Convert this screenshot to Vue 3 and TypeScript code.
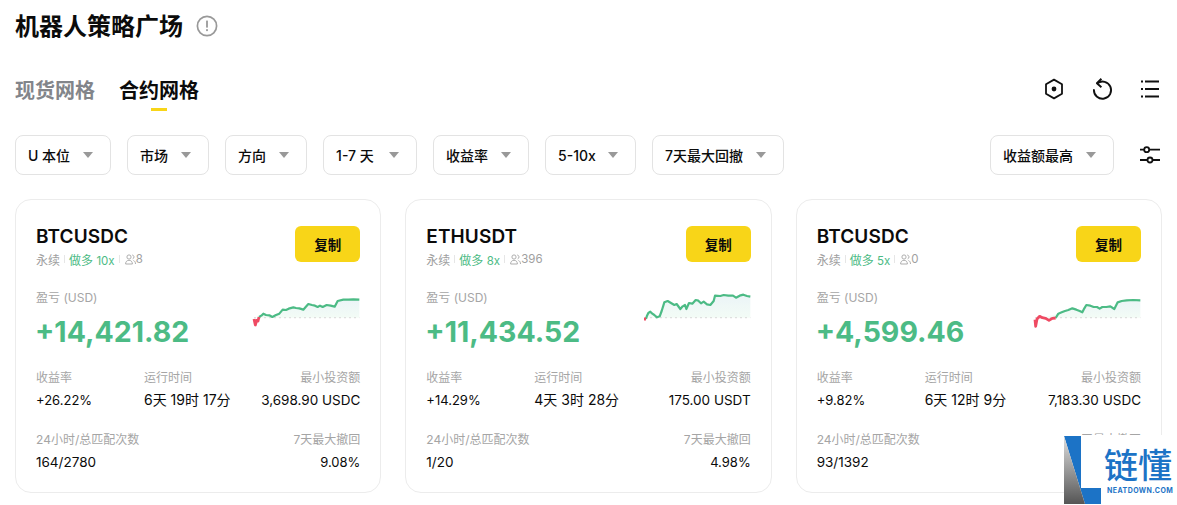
<script setup lang="ts">
type Pt = [number, number]
interface Bot {
  symbol: string; side: string; lev: string; users: string; pnl: string
  rate: string; runtime: string; minInvest: string; matches: string; drawdown: string
  offset: number; split: number; pts: Pt[]
}

const filters = ['U 本位', '市场', '方向', '1-7 天', '收益率', '5-10x', '7天最大回撤']

const bots: Bot[] = [
  {
    symbol: 'BTCUSDC', side: '做多', lev: '10x', users: '8', pnl: '+14,421.82', rate: '+26.22%',
    runtime: '6天 19时 17分', minInvest: '3,698.90 USDC', matches: '164/2780', drawdown: '9.08%',
    offset: 30, split: 4,
    pts: [[42, 102], [46, 120], [50, 106], [54, 108], [57, 96], [64, 92], [70, 86], [78, 90], [88, 91], [97, 96], [108, 90], [118, 86], [128, 74], [138, 75], [146, 71], [160, 67], [168, 69], [178, 70], [190, 74], [197, 66], [205, 57], [216, 60], [225, 62], [233, 66], [240, 62], [248, 66], [260, 60], [272, 62], [284, 65], [293, 48], [310, 44], [325, 44], [340, 43], [358, 44]],
  },
  {
    symbol: 'ETHUSDT', side: '做多', lev: '8x', users: '396', pnl: '+11,434.52', rate: '+14.29%',
    runtime: '4天 3时 28分', minInvest: '175.00 USDT', matches: '1/20', drawdown: '4.98%',
    offset: 18, split: 1,
    pts: [[27, 102], [33, 102], [36, 92], [40, 84], [46, 80], [52, 86], [58, 90], [66, 97], [74, 94], [80, 78], [88, 52], [98, 48], [108, 54], [118, 60], [125, 57], [136, 72], [143, 64], [150, 60], [154, 72], [162, 54], [172, 56], [182, 45], [190, 47], [198, 55], [206, 50], [216, 58], [226, 60], [236, 48], [240, 32], [256, 33], [266, 30], [280, 32], [294, 32], [303, 38], [314, 32], [325, 29], [336, 33], [346, 35]],
  },
  {
    // drawdown value sits under the watermark in the reference, so it stays empty
    symbol: 'BTCUSDC', side: '做多', lev: '5x', users: '0', pnl: '+4,599.46', rate: '+9.82%',
    runtime: '6天 12时 9分', minInvest: '7,183.30 USDC', matches: '93/1392', drawdown: '',
    offset: 18, split: 8,
    pts: [[30, 104], [32, 124], [36, 102], [44, 94], [52, 98], [62, 100], [72, 106], [82, 100], [92, 99], [100, 86], [110, 82], [120, 78], [130, 75], [142, 70], [154, 74], [164, 78], [172, 82], [178, 70], [184, 60], [196, 62], [206, 66], [216, 66], [224, 71], [232, 66], [244, 66], [256, 64], [268, 72], [278, 52], [290, 48], [305, 46], [325, 45], [346, 46]],
  },
]

const line = (pts: Pt[], off: number) => pts.map(([x, y]) => `${(x - off) / 3},${y / 3}`).join(' ')

const redLine = (b: Bot) => line(b.pts.slice(0, b.split + 1), b.offset)
const greenLine = (b: Bot) => line(b.pts.slice(b.split), b.offset)

// area between the curve and the dotted base line
const area = (b: Bot) => {
  const first = b.pts[0]
  const last = b.pts[b.pts.length - 1]
  const base = 98 / 3
  return `${(first[0] - b.offset) / 3},${base} ${line(b.pts.filter(p => p[1] <= 98), b.offset)} ${(last[0] - b.offset) / 3},${base}`
}
const baseEnd = (b: Bot) => (b.pts[b.pts.length - 1][0] - b.offset) / 3
</script>

<template>
  <div class="page">
    <div class="title-row">
      <h1>机器人策略广场</h1>
      <svg class="info" width="22" height="22" viewBox="0 0 22 22" aria-hidden="true">
        <circle cx="11" cy="11" r="9.6" fill="none" stroke="#999" stroke-width="1.7" />
        <rect x="10.1" y="5.6" width="1.8" height="7" fill="#999" />
        <rect x="10.1" y="14.2" width="1.8" height="1.9" fill="#999" />
      </svg>
    </div>

    <div class="tab-row">
      <div class="tabs">
        <span class="tab">现货网格</span>
        <span class="tab active">合约网格</span>
      </div>
      <div class="tools">
        <svg width="24" height="24" viewBox="0 0 24 24" fill="none" stroke="#111" stroke-width="1.8" aria-hidden="true">
          <path d="M12 2.6 20 7.2v9.6l-8 4.6-8-4.600V7.200z" stroke-linejoin="round" />
          <circle cx="12" cy="12" r="2.4" fill="#111" stroke="none" />
        </svg>
        <svg width="24" height="24" viewBox="0 0 24 24" fill="none" stroke="#111" stroke-width="1.9" aria-hidden="true">
          <path d="M7.4 6.2A8.6 8.6 0 1 1 3.900 13" stroke-linecap="round" />
          <path d="M11.4 1.800 6.900 6.200l4.500 4" stroke-linejoin="round" />
        </svg>
        <svg width="24" height="24" viewBox="0 0 24 24" fill="none" stroke="#111" stroke-width="2" aria-hidden="true">
          <path d="M7 4.500h14M7 12h14M7 19.500h14M3 4.500h2M3 12h2M3 19.500h2" />
        </svg>
      </div>
    </div>

    <div class="filter-row">
      <div v-for="f in filters" :key="f" class="select">
        <span>{{ f }}</span><i class="caret"></i>
      </div>
      <div class="select sort"><span>收益额最高</span><i class="caret"></i></div>
      <svg class="sliders" width="24" height="24" viewBox="0 0 24 24" fill="none" stroke="#111" stroke-width="1.8" aria-hidden="true">
        <path d="M2 6.700h4.400M11 6.700h11M2 17h7.400M14 17h8" />
        <circle cx="8.700" cy="6.700" r="2.500" />
        <circle cx="12" cy="17" r="2.500" />
      </svg>
    </div>

    <div class="cards">
      <div v-for="(b, i) in bots" :key="i" class="card">
        <div class="card-head">
          <div>
            <div class="symbol">{{ b.symbol }}</div>
            <div class="meta">
              <span>永续</span><i class="sep"></i>
              <span class="green">{{ b.side }} <span class="lev">{{ b.lev }}</span></span><i class="sep"></i>
              <svg class="people" width="11" height="11" viewBox="0 0 11 11" fill="none" stroke="#a5a5a5" stroke-width="0.9" aria-hidden="true">
                <circle cx="4" cy="3" r="2.100" />
                <path d="M.6 10c0-2.400 1.400-3.700 3.400-3.700S7.400 7.600 7.400 10zM7.200 1c1.200.2 1.800 1 1.800 2S8.400 4.600 7.600 4.900M8.400 6.500c1.300.4 2.100 1.600 2.100 3.500" />
              </svg>
              <span class="users">{{ b.users }}</span>
            </div>
          </div>
          <button class="copy">复制</button>
        </div>

        <div class="pnl-row">
          <div>
            <div class="label">盈亏 (USD)</div>
            <div class="pnl">{{ b.pnl }}</div>
          </div>
          <svg class="spark" width="110" height="50" viewBox="0 0 110 50" aria-hidden="true">
            <defs>
              <linearGradient :id="`fill${i}`" x1="0" y1="0" x2="0" y2="1">
                <stop offset="0" stop-color="#ebf4f7" />
                <stop offset="1" stop-color="#f3fcf6" />
              </linearGradient>
            </defs>
            <polygon :points="area(b)" :fill="`url(#fill${i})`" />
            <line x1="4" :x2="baseEnd(b)" y1="32.700" y2="32.700" stroke="#dfdfdf" stroke-width="1.200" stroke-dasharray="2 3" />
            <polyline :points="greenLine(b)" fill="none" stroke="#4cbb85" stroke-width="2.200" stroke-linejoin="round" />
            <polyline :points="redLine(b)" fill="none" stroke="#ef4a63" stroke-width="2.800" stroke-linejoin="round" />
          </svg>
        </div>

        <div class="stats">
          <div><div class="label">收益率</div><div class="val small">{{ b.rate }}</div></div>
          <div><div class="label">运行时间</div><div class="val runtime">{{ b.runtime }}</div></div>
          <div class="right"><div class="label">最小投资额</div><div class="val">{{ b.minInvest }}</div></div>
          <div class="wide"><div class="label">24小时/总匹配次数</div><div class="val">{{ b.matches }}</div></div>
          <div class="right"><div class="label">7天最大撤回</div><div class="val small">{{ b.drawdown }}</div></div>
        </div>
      </div>
    </div>

    <div class="watermark">
      <svg width="37" height="68" viewBox="0 0 37 68" aria-hidden="true">
        <defs>
          <linearGradient id="wmGray" x1="0" y1="0" x2="0" y2="1">
            <stop offset="0" stop-color="#dedede" />
            <stop offset="1" stop-color="#555" />
          </linearGradient>
        </defs>
        <polygon points="0,0 17,0 17,52 37,52 37,68 21,68" fill="#1c73c6" />
        <polygon points="0,0 21,68 0,68" fill="url(#wmGray)" />
      </svg>
      <div class="wm-text">
        <div class="wm-cn">链懂</div>
        <div class="wm-en">NEATDOWN.COM</div>
      </div>
    </div>
  </div>
</template>

<style>
html, body { margin: 0; background: #fff; overflow: hidden; }
</style>

<style scoped>
.page { position: relative; width: 1177px; height: 505px; overflow: hidden; box-sizing: border-box; padding: 0 15px; color: #0b0b0b; font-family: Inter, "Noto Sans CJK SC", sans-serif; }
.title-row { display: flex; align-items: center; gap: 13px; height: 53px; }
h1 { margin: 0; font-size: 24px; font-weight: 700; line-height: 53px; }
.info { margin-top: -2px; }
.tab-row { display: flex; align-items: flex-start; justify-content: space-between; height: 82px; }
.tabs { display: flex; gap: 24px; padding-top: 22px; }
.tab { position: relative; font-size: 20px; font-weight: 700; line-height: 32px; color: #82858a; }
.tab.active { color: #0b0b0b; }
.tab.active::after { content: ""; position: absolute; left: 32px; top: 33px; width: 16px; height: 3px; background: #f8d518; }
.tools { display: flex; gap: 24px; padding-top: 24px; }
.filter-row { display: flex; gap: 16px; align-items: center; height: 40px; }
.select { display: flex; align-items: center; justify-content: space-between; gap: 13px; box-sizing: border-box; height: 40px; padding: 0 17px 0 12px; border: 1px solid #e3e3e3; border-radius: 8px; font-size: 14px; font-weight: 500; white-space: nowrap; }
.select:nth-child(4) { min-width: 94px; }
.select:nth-child(6) { gap: 12px; }
.caret { display: block; width: 0; height: 0; border-style: solid; border-width: 6px 5px 0; border-color: #999 transparent transparent; }
.sort { margin-left: auto; margin-right: 8px; }
.cards { display: grid; grid-template-columns: repeat(3, 1fr); gap: 24px; margin-top: 24px; }
.card { box-sizing: border-box; height: 294px; padding: 26px 20px 0; border: 1px solid #ececec; border-radius: 16px; }
.card-head { display: flex; align-items: flex-start; justify-content: space-between; height: 64px; }
.symbol { margin-top: 1px; font-size: 19px; font-weight: 600; line-height: 20px; letter-spacing: 0.1px; }
.meta { display: flex; align-items: center; height: 18px; margin-top: 3px; font-size: 12px; color: #a0a0a0; }
.green { color: #4cbb85; }
.lev { font-size: 11.500px; }
.sep { width: 1px; height: 8px; margin: 0 4px; background: #e6e6e6; }
.people { margin-left: 1px; }
.users { font-size: 11.500px; }
.copy { width: 65px; height: 36px; border: 0; border-radius: 6px; background: #f8d518; color: #0b0b0b; font: 600 13.500px Inter, "Noto Sans CJK SC", sans-serif; }
.pnl-row { display: flex; justify-content: space-between; align-items: flex-start; height: 80px; }
.label { font-size: 12px; line-height: 16px; color: #a5a5a5; }
.pnl { margin: 9px 0 0 -1px; font-size: 28.500px; font-weight: 700; line-height: 34px; color: #4cbb85; }
.spark { margin-top: -5px; }
.stats { display: grid; grid-template-columns: 108px 1fr auto; row-gap: 23px; }
.wide { grid-column: span 2; }
.right { text-align: right; }
.val { margin-top: 5px; font-size: 13.500px; line-height: 18px; white-space: nowrap; }
.val.small { font-size: 13px; }
.val.runtime { font-size: 14px; }
.watermark { position: absolute; left: 1064px; top: 436px; width: 113px; height: 69px; display: flex; gap: 4px; background: #fff; box-shadow: 0 -1px 0 #fff; }
.wm-text { padding-top: 12px; color: #1c73c6; }
.wm-cn { margin-left: -1px; font-size: 34px; font-weight: 500; line-height: 35px; white-space: nowrap; }
.wm-en { margin: 3px 0 0 2px; font-size: 7px; font-weight: 700; line-height: 9px; letter-spacing: 0.450px; white-space: nowrap; }
</style>
